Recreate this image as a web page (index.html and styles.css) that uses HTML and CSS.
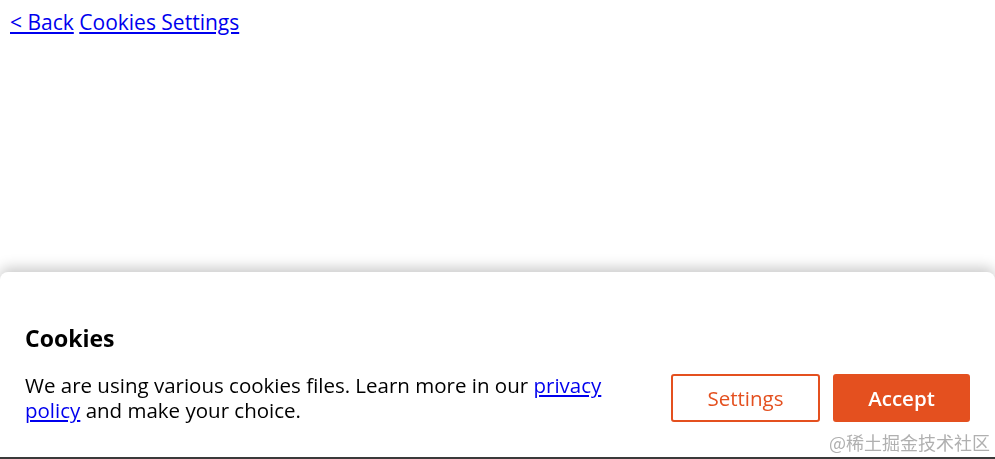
FILE: index.html
```html
<!DOCTYPE html>
<html lang="en">
<head>
<meta charset="utf-8">
<title>Cookies Settings</title>
<link rel="stylesheet" href="styles.css">
</head>
<body>
<nav class="nav"><a href="#">&lt; Back</a> <a href="#">Cookies Settings</a></nav>
<section class="banner">
  <h2 class="banner-title">Cookies</h2>
  <div class="banner-row">
    <p class="banner-text">We are using various cookies files. Learn more in our <a href="#">privacy policy</a> and make your choice.</p>
    <div class="banner-actions">
      <button class="btn btn-outline">Settings</button>
      <button class="btn btn-solid">Accept</button>
    </div>
  </div>
</section>
<div class="watermark">@稀土掘金技术社区</div>
</body>
</html>
```
FILE: styles.css
```css
html, body { height: 100%; }
body {
  margin: 8px;
  font-family: "Open Sans", "Noto Sans", sans-serif;
  font-size: 20px;
  background: #fff;
  color: #000;
}
a { color: #0000ee; }
.nav {
  padding-left: 2px;
  font-size: 21px;
  line-height: 28px;
}
.banner {
  position: fixed;
  left: 0;
  right: 0;
  bottom: 0;
  height: 187px;
  box-sizing: border-box;
  padding: 52px 25px 0 25px;
  background: #fff;
  border-radius: 8px 8px 0 0;
  box-shadow: 0 -4px 14px rgba(0,0,0,0.22);
  border-bottom: 2px solid #3a3a3a;
}
.banner-title {
  margin: 0 0 20px 0;
  font-size: 23px;
  line-height: 29px;
  font-weight: 700;
}
.banner-row {
  display: flex;
  align-items: center;
  justify-content: space-between;
}
.banner-text {
  margin: 0;
  max-width: 600px;
  font-size: 20.5px;
  line-height: 25px;
}
.banner-actions {
  display: flex;
  gap: 13px;
}
.btn {
  font-family: inherit;
  font-size: 20.5px;
  height: 48px;
  border-radius: 3px;
  cursor: pointer;
}
.btn-outline {
  width: 149px;
  background: #fff;
  color: #e4501f;
  border: 2px solid #e4501f;
}
.btn-solid {
  width: 137px;
  background: #e4501f;
  color: #fff;
  border: 2px solid #e4501f;
  font-weight: 600;
}
.watermark {
  position: fixed;
  right: 5px;
  bottom: 4px;
  font-family: "Noto Sans CJK SC", sans-serif;
  font-size: 18px;
  color: #b0b0b0;
}
```
